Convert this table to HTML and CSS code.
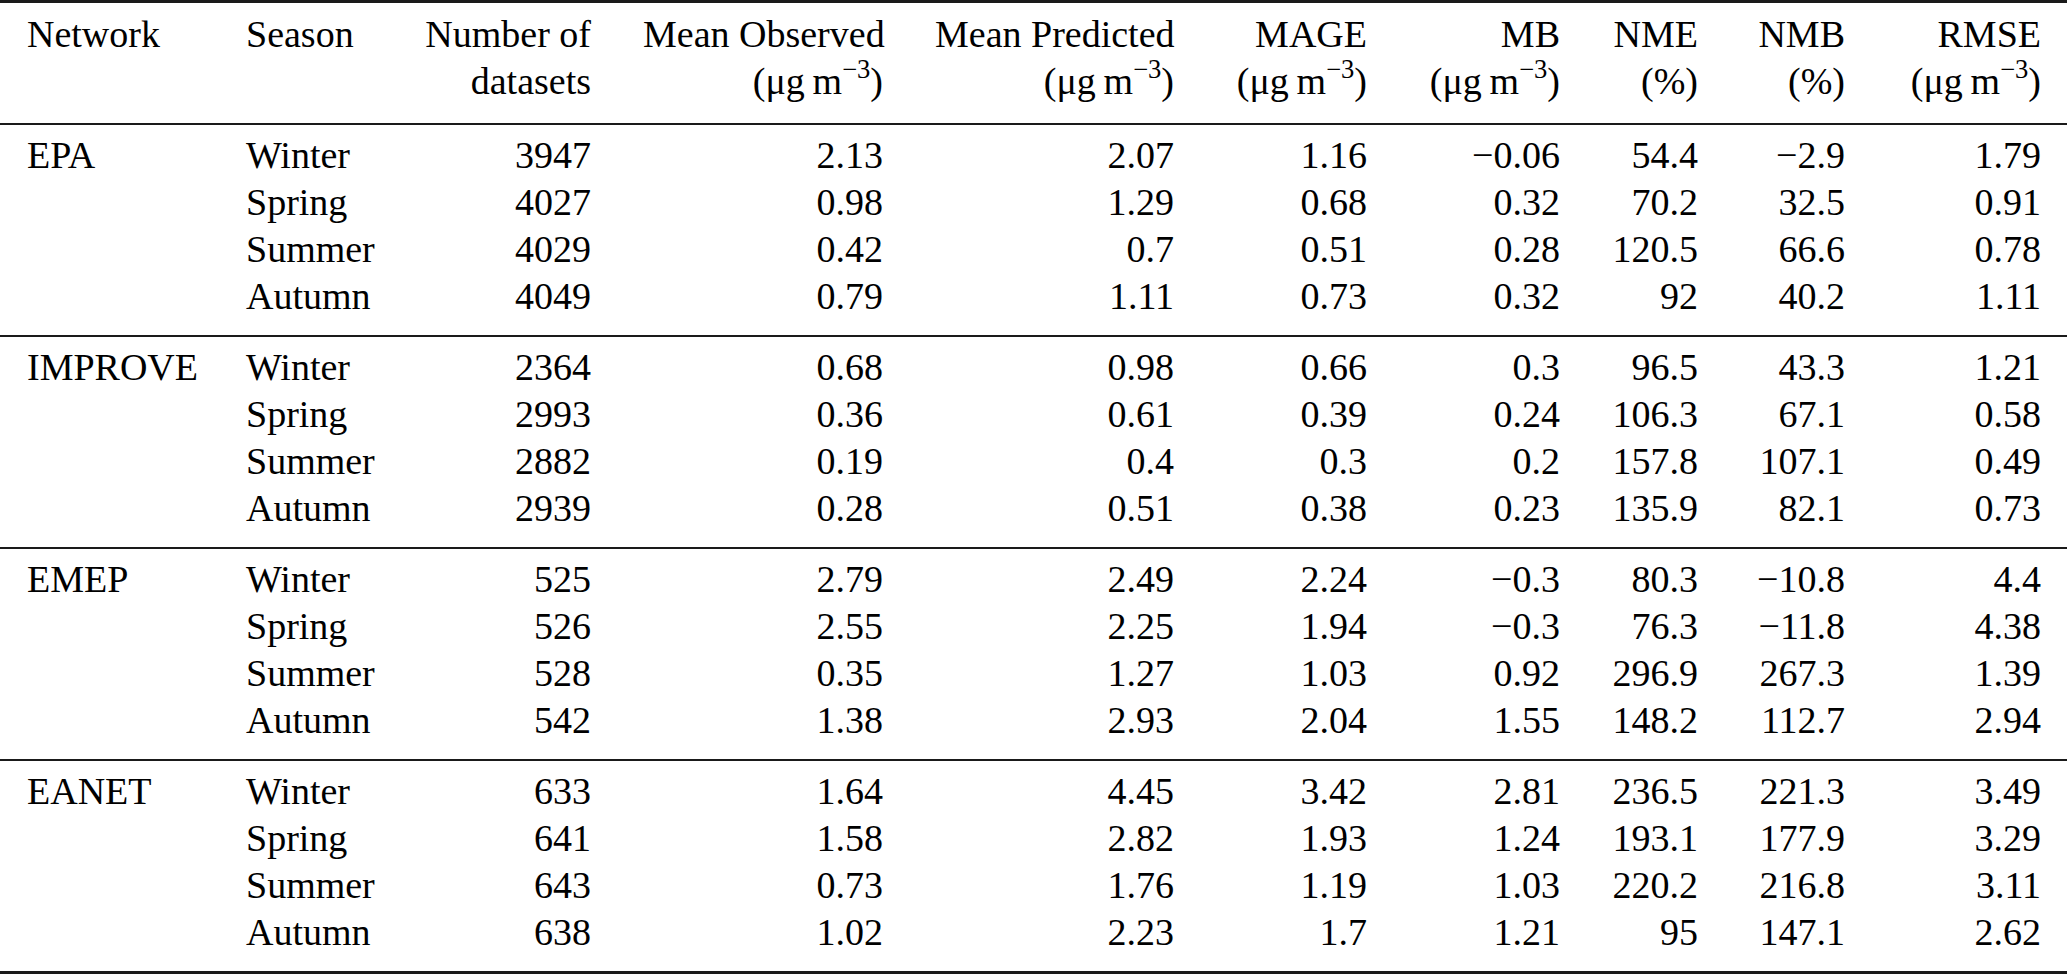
FILE: index.html
```html
<!DOCTYPE html>
<html lang="en">
<head>
<meta charset="utf-8">
<title>Seasonal model evaluation statistics</title>
<link rel="stylesheet" href="styles.css">
</head>
<body>
<table class="stats">
  <colgroup>
    <col class="c-network">
    <col class="c-season">
    <col class="c-count">
    <col class="c-obs">
    <col class="c-pred">
    <col class="c-mage">
    <col class="c-mb">
    <col class="c-nme">
    <col class="c-nmb">
    <col class="c-rmse">
  </colgroup>
  <thead>
    <tr>
      <th class="left">Network</th>
      <th class="left">Season</th>
      <th>Number of<br>datasets</th>
      <th>Mean Observed<br>(μg&thinsp;m<sup>−3</sup>)</th>
      <th>Mean Predicted<br>(μg&thinsp;m<sup>−3</sup>)</th>
      <th>MAGE<br>(μg&thinsp;m<sup>−3</sup>)</th>
      <th>MB<br>(μg&thinsp;m<sup>−3</sup>)</th>
      <th>NME<br>(%)</th>
      <th>NMB<br>(%)</th>
      <th>RMSE<br>(μg&thinsp;m<sup>−3</sup>)</th>
    </tr>
  </thead>
  <tbody>
    <tr><td class="left">EPA</td><td class="left">Winter</td><td>3947</td><td>2.13</td><td>2.07</td><td>1.16</td><td>−0.06</td><td>54.4</td><td>−2.9</td><td>1.79</td></tr>
    <tr><td class="left"></td><td class="left">Spring</td><td>4027</td><td>0.98</td><td>1.29</td><td>0.68</td><td>0.32</td><td>70.2</td><td>32.5</td><td>0.91</td></tr>
    <tr><td class="left"></td><td class="left">Summer</td><td>4029</td><td>0.42</td><td>0.7</td><td>0.51</td><td>0.28</td><td>120.5</td><td>66.6</td><td>0.78</td></tr>
    <tr><td class="left"></td><td class="left">Autumn</td><td>4049</td><td>0.79</td><td>1.11</td><td>0.73</td><td>0.32</td><td>92</td><td>40.2</td><td>1.11</td></tr>
  </tbody>
  <tbody>
    <tr><td class="left">IMPROVE</td><td class="left">Winter</td><td>2364</td><td>0.68</td><td>0.98</td><td>0.66</td><td>0.3</td><td>96.5</td><td>43.3</td><td>1.21</td></tr>
    <tr><td class="left"></td><td class="left">Spring</td><td>2993</td><td>0.36</td><td>0.61</td><td>0.39</td><td>0.24</td><td>106.3</td><td>67.1</td><td>0.58</td></tr>
    <tr><td class="left"></td><td class="left">Summer</td><td>2882</td><td>0.19</td><td>0.4</td><td>0.3</td><td>0.2</td><td>157.8</td><td>107.1</td><td>0.49</td></tr>
    <tr><td class="left"></td><td class="left">Autumn</td><td>2939</td><td>0.28</td><td>0.51</td><td>0.38</td><td>0.23</td><td>135.9</td><td>82.1</td><td>0.73</td></tr>
  </tbody>
  <tbody>
    <tr><td class="left">EMEP</td><td class="left">Winter</td><td>525</td><td>2.79</td><td>2.49</td><td>2.24</td><td>−0.3</td><td>80.3</td><td>−10.8</td><td>4.4</td></tr>
    <tr><td class="left"></td><td class="left">Spring</td><td>526</td><td>2.55</td><td>2.25</td><td>1.94</td><td>−0.3</td><td>76.3</td><td>−11.8</td><td>4.38</td></tr>
    <tr><td class="left"></td><td class="left">Summer</td><td>528</td><td>0.35</td><td>1.27</td><td>1.03</td><td>0.92</td><td>296.9</td><td>267.3</td><td>1.39</td></tr>
    <tr><td class="left"></td><td class="left">Autumn</td><td>542</td><td>1.38</td><td>2.93</td><td>2.04</td><td>1.55</td><td>148.2</td><td>112.7</td><td>2.94</td></tr>
  </tbody>
  <tbody>
    <tr><td class="left">EANET</td><td class="left">Winter</td><td>633</td><td>1.64</td><td>4.45</td><td>3.42</td><td>2.81</td><td>236.5</td><td>221.3</td><td>3.49</td></tr>
    <tr><td class="left"></td><td class="left">Spring</td><td>641</td><td>1.58</td><td>2.82</td><td>1.93</td><td>1.24</td><td>193.1</td><td>177.9</td><td>3.29</td></tr>
    <tr><td class="left"></td><td class="left">Summer</td><td>643</td><td>0.73</td><td>1.76</td><td>1.19</td><td>1.03</td><td>220.2</td><td>216.8</td><td>3.11</td></tr>
    <tr><td class="left"></td><td class="left">Autumn</td><td>638</td><td>1.02</td><td>2.23</td><td>1.7</td><td>1.21</td><td>95</td><td>147.1</td><td>2.62</td></tr>
  </tbody>
</table>
</body>
</html>
```

FILE: styles.css
```css
html, body {
  margin: 0;
  padding: 0;
  background: #ffffff;
}

body {
  font-family: "Liberation Serif", "Times New Roman", serif;
  font-size: 38px;
  color: #000000;
}

.stats {
  width: 2067px;
  table-layout: fixed;
  border-collapse: collapse;
  border-top: 3px solid #1a1a1a;
  border-bottom: 3px solid #1a1a1a;
}

.c-network { width: 220px; }
.c-season  { width: 150px; }
.c-count   { width: 247px; }
.c-obs     { width: 292px; }
.c-pred    { width: 291px; }
.c-mage    { width: 193px; }
.c-mb      { width: 193px; }
.c-nme     { width: 138px; }
.c-nmb     { width: 147px; }
.c-rmse    { width: 196px; }

.stats th,
.stats td {
  padding: 0 26px;
  line-height: 47px;
  font-weight: normal;
  text-align: right;
  white-space: nowrap;
  vertical-align: top;
}

.stats th:first-child,
.stats td:first-child {
  padding-left: 27px;
}

.stats .left {
  text-align: left;
}

.stats thead th {
  padding-top: 8px;
  padding-bottom: 18px;
}

.stats thead {
  border-bottom: 2px solid #1a1a1a;
}

.stats tbody + tbody {
  border-top: 2px solid #1a1a1a;
}

.stats tbody tr:first-child td {
  padding-top: 7px;
}

.stats tbody tr:last-child td {
  padding-bottom: 15px;
}

.stats sup {
  font-size: 0.7em;
  line-height: 0;
  vertical-align: 0.62em;
}
```
